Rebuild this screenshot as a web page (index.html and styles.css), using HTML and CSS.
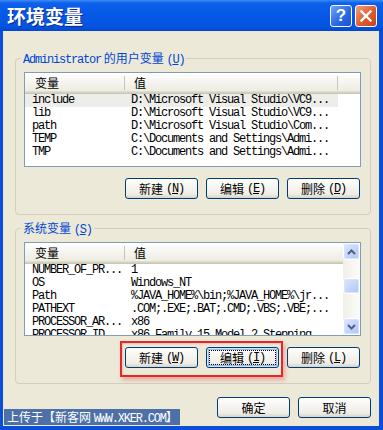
FILE: index.html
```html
<!DOCTYPE html>
<html>
<head>
<meta charset="utf-8">
<link rel="stylesheet" href="styles.css">
</head>
<body>
<div class="window">
  <div class="titlebar">
    <span class="title">环境变量</span>
    <div class="tb-buttons">
      <div class="tb-btn help">?</div>
      <div class="tb-btn close">
        <svg width="14" height="14" viewBox="0 0 14 14"><path d="M2.5 2.5 L11.5 11.5 M11.5 2.5 L2.5 11.5" stroke="#fff" stroke-width="2.4" stroke-linecap="square"/></svg>
      </div>
    </div>
  </div>
  <div class="client">
    <fieldset class="group g1">
      <legend><span class="lat">Administrator</span> 的用户变量 <span class="lat">(<u>U</u>)</span></legend>
      <div class="list l1">
        <div class="list-main">
          <div class="lv-header">
            <div class="hc hc1">变量</div><div class="sep"></div>
            <div class="hc hc2">值</div><div class="sep"></div>
            <div class="hc hc3"></div>
          </div>
          <div class="rows">
            <div class="row sel"><span class="c1">include</span><span class="c2">D:\Microsoft Visual Studio\VC9...</span></div>
            <div class="row"><span class="c1">lib</span><span class="c2">D:\Microsoft Visual Studio\VC9...</span></div>
            <div class="row"><span class="c1">path</span><span class="c2">D:\Microsoft Visual Studio\Com...</span></div>
            <div class="row"><span class="c1">TEMP</span><span class="c2">C:\Documents and Settings\Admi...</span></div>
            <div class="row"><span class="c1">TMP</span><span class="c2">C:\Documents and Settings\Admi...</span></div>
          </div>
        </div>
      </div>
      <div class="btnrow">
        <button class="btn">新建 <span class="lat">(<u>N</u>)</span></button>
        <button class="btn">编辑 <span class="lat">(<u>E</u>)</span></button>
        <button class="btn">删除 <span class="lat">(<u>D</u>)</span></button>
      </div>
    </fieldset>

    <fieldset class="group g2">
      <legend>系统变量 <span class="lat">(<u>S</u>)</span></legend>
      <div class="list l2">
        <div class="list-main">
          <div class="lv-header">
            <div class="hc hc1">变量</div><div class="sep"></div>
            <div class="hc hc2 wide">值</div>
          </div>
          <div class="rows">
            <div class="row"><span class="c1">NUMBER_OF_PR...</span><span class="c2">1</span></div>
            <div class="row"><span class="c1">OS</span><span class="c2">Windows_NT</span></div>
            <div class="row"><span class="c1">Path</span><span class="c2">%JAVA_HOME%\bin;%JAVA_HOME%\jr...</span></div>
            <div class="row"><span class="c1">PATHEXT</span><span class="c2">.COM;.EXE;.BAT;.CMD;.VBS;.VBE;...</span></div>
            <div class="row"><span class="c1">PROCESSOR_AR...</span><span class="c2">x86</span></div>
            <div class="row"><span class="c1">PROCESSOR_ID...</span><span class="c2">x86 Family 15 Model 2 Stepping...</span></div>
          </div>
        </div>
        <div class="vscroll">
          <div class="sb-btn"><svg width="9" height="6" viewBox="0 0 9 6"><path d="M1 5 L4.5 1.5 L8 5" fill="none" stroke="#4D6185" stroke-width="2"/></svg></div>
          <div class="sb-gap"></div>
          <div class="sb-thumb"></div>
          <div class="sb-fill"></div>
          <div class="sb-btn"><svg width="9" height="6" viewBox="0 0 9 6"><path d="M1 1 L4.5 4.5 L8 1" fill="none" stroke="#4D6185" stroke-width="2"/></svg></div>
        </div>
      </div>
      <div class="btnrow">
        <div class="highlight"></div>
        <button class="btn">新建 <span class="lat">(<u>W</u>)</span></button>
        <button class="btn focus">编辑 <span class="lat">(<u>I</u>)</span></button>
        <button class="btn">删除 <span class="lat">(<u>L</u>)</span></button>
      </div>
    </fieldset>

    <div class="dlg-buttons">
      <button class="btn">确定</button>
      <button class="btn">取消</button>
    </div>
  </div>
  <div class="watermark">上传于【新客网 <span class="lat">WWW.XKER.COM</span>】</div>
</div>
</body>
</html>
```

FILE: styles.css
```css
* { box-sizing: border-box; }
html, body { margin: 0; padding: 0; }
body {
  width: 383px;
  height: 430px;
  overflow: hidden;
  background: #0A4FD8;
  font-family: "Noto Sans CJK SC", sans-serif;
  font-size: 12px;
}
.lat {
  font-family: "Liberation Mono", monospace;
  font-size: 12px;
  letter-spacing: -1.2px;
}
.window {
  position: relative;
  width: 383px;
  height: 430px;
  display: flex;
  flex-direction: column;
}
.titlebar {
  height: 31px;
  flex: none;
  display: flex;
  align-items: center;
  justify-content: space-between;
  padding: 0 6px 0 7px;
  background: linear-gradient(#3D8CF5 0, #0D60EA 3px, #0759E8 40%, #0454E2 85%, #0346CF 100%);
}
.title {
  color: #fff;
  font-weight: bold;
  font-size: 19px;
  line-height: 1;
  text-shadow: 1px 1px 0 #0A2A8A;
  margin-top: -1px;
}
.tb-buttons { display: flex; gap: 3px; }
.tb-btn {
  width: 22px;
  height: 22px;
  border: 1px solid #fff;
  border-radius: 3px;
  display: flex;
  align-items: center;
  justify-content: center;
}
.help {
  background: linear-gradient(135deg, #6FA4FA, #2C69E6 55%, #1B52D4);
  color: #fff;
  font: bold 17px "Liberation Sans", sans-serif;
}
.close {
  background: linear-gradient(135deg, #F5A07A, #E25A2D 55%, #C7411C);
}
.client {
  flex: 1;
  background: #ECE9D8;
  border-left: 3px solid #0B4FD8;
  border-right: 4px solid #0B4FD8;
  border-bottom: 4px solid #0B4FD8;
  padding: 0 8px 0 12px;
  display: flex;
  flex-direction: column;
}
.group {
  margin: 0;
  border: 1px solid #D0D0BF;
  border-radius: 4px;
  padding: 7px 9px 15px 8px;
  min-width: 0;
}
.group legend {
  color: #0046D5;
  padding: 0 2px;
  margin-left: -3px;
  line-height: 14px;
  height: 14px;
}
.g1 { margin-top: 20px; }
.g2 { margin-top: 6px; }
.list {
  width: 337px;
  border: 1px solid #7F9DB9;
  background: #fff;
  display: flex;
  overflow: hidden;
}
.l1 { height: 95px; }
.l2 { height: 94px; }
.list-main {
  flex: 1;
  min-width: 0;
  display: flex;
  flex-direction: column;
}
.lv-header {
  height: 21px;
  flex: none;
  display: flex;
  background: linear-gradient(#FFFFFF, #F4F3EE 50%, #EBEADB);
  box-shadow: inset 0 -1px #CBC7B8, inset 0 -2px #D6D2C2, inset 0 -3px #E2DECD;
}
.hc {
  line-height: 20px;
  color: #000;
  white-space: nowrap;
}
.hc1 { width: 99px; padding-left: 10px; }
.hc2 { width: 212px; padding-left: 9px; }
.hc2.wide { flex: 1; }
.hc3 { flex: 1; }
.sep {
  width: 1px;
  margin: 3px 0 4px;
  background: #C7C5B2;
}
.rows { flex: 1; overflow: hidden; }
.row {
  display: flex;
  height: 13px;
  line-height: 13px;
  font-family: "Liberation Mono", monospace;
  font-size: 12px;
  letter-spacing: -1.2px;
  color: #000;
  white-space: nowrap;
  width: 313px;
}
.row.sel { background: #EDEDEA; }
.c1 { width: 100px; padding-left: 7px; overflow: hidden; flex: none; }
.c2 { width: 213px; padding-left: 6px; overflow: hidden; flex: none; }
.vscroll {
  width: 17px;
  flex: none;
  display: flex;
  flex-direction: column;
  background: linear-gradient(90deg, #F1EFE6, #FCFCF9);
}
.sb-btn, .sb-thumb {
  border: 1px solid #FFFFFF;
  border-radius: 3px;
  background: linear-gradient(135deg, #DDE7FE, #C1D2F9 60%, #B2C6F3);
  box-shadow: inset 0 0 0 1px #D8E3FC;
}
.sb-btn {
  height: 17px;
  flex: none;
  display: flex;
  align-items: center;
  justify-content: center;
}
.sb-gap { height: 18px; flex: none; }
.sb-thumb { height: 16px; flex: none; }
.sb-fill { flex: 1; }
.btnrow {
  position: relative;
  margin-top: 11px;
  display: flex;
  justify-content: flex-end;
  gap: 8px;
  padding-right: 1px;
}
.btn {
  width: 73px;
  height: 21px;
  border: 1px solid #003C74;
  border-radius: 3px;
  background: linear-gradient(#FFFFFF, #F7F6F2 35%, #EEEDE7 80%, #D8D3C8);
  font-family: "Noto Sans CJK SC", sans-serif;
  font-size: 12px;
  color: #000;
  padding: 0;
  margin: 0;
  display: flex;
  align-items: center;
  justify-content: center;
  gap: 3px;
  line-height: 1;
}
.btn.focus {
  box-shadow: inset 0 0 0 1px #CEE7FF, inset 0 0 0 2px #98B8EA;
  outline: 1px dotted #000;
  outline-offset: -4px;
}
.highlight {
  position: absolute;
  left: 96px;
  top: -6px;
  width: 163px;
  height: 36px;
  border: 2px solid #E5262B;
  box-shadow: 2px 3px 4px rgba(235, 90, 90, 0.45), inset 1px 1px 2px rgba(235, 90, 90, 0.25);
  pointer-events: none;
}
.dlg-buttons {
  margin-top: 13px;
  display: flex;
  justify-content: flex-end;
  gap: 8px;
}
.watermark {
  position: absolute;
  left: 4px;
  top: 409px;
  height: 16px;
  padding: 0 2px 0 3px;
  background: #4D70A8;
  color: #fff;
  font-size: 12px;
  line-height: 16px;
  white-space: nowrap;
}
```
